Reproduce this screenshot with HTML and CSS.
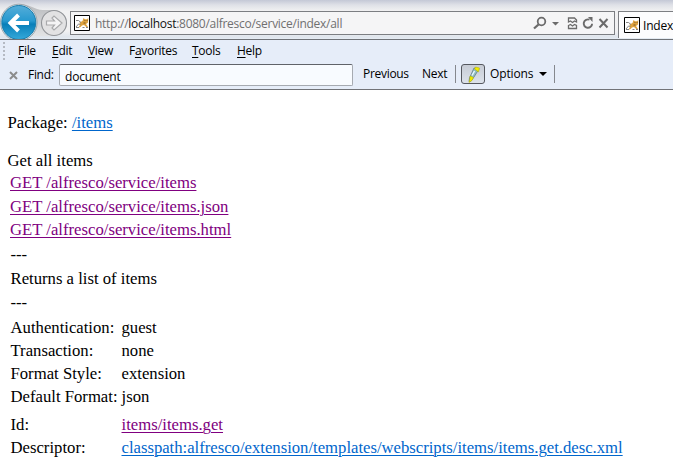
FILE: index.html
```html
<!DOCTYPE html>
<html lang="en">
<head>
<meta charset="utf-8">
<title>Index</title>
<link rel="stylesheet" href="styles.css">
</head>
<body>
<svg class="defs" width="0" height="0" aria-hidden="true">
  <symbol id="cat" viewBox="0 0 16 16">
    <path d="M.5.5h15v15H.5z" fill="#fff" stroke="#000"/>
    <path d="M5.500 7.500 8.500 6 9.500 3l1.500 1.200h2L14.300 3l-.3 4.500-2 1.500 2 3-1.500.3-2.500-2.300-2 .5L6.500 12l-2 .8 1.500-3z" fill="#dda23f"/>
    <path d="M2 5.500h2.500L7 7.500M2 12l2.500-3 2 .5M2 12.500h3M8.500 12.500h2M12 12.500h2" fill="none" stroke="#858585"/>
    <path d="M10.500 5.500h.9M12.700 5.500h.8M9.500 8h2" stroke="#66451c" stroke-width=".8"/>
  </symbol>
</svg>
<header class="chrome">
  <svg class="nav" width="70" height="39" viewBox="0 0 70 39">
    <defs>
      <linearGradient id="blue" x1="0" y1="0" x2="0" y2="1"><stop offset="0" stop-color="#55add9"/><stop offset=".45" stop-color="#2799cf"/><stop offset=".55" stop-color="#087fb9"/><stop offset="1" stop-color="#35a9da"/></linearGradient>
      <linearGradient id="shell" x1="0" y1="0" x2="0" y2="1"><stop offset="0" stop-color="#b9bbbe"/><stop offset="1" stop-color="#e2e3e4"/></linearGradient>
    </defs>
    <path d="M19 4c12 0 15 6 24 6h11a13 13 0 0 1 0 26H19z" fill="url(#shell)"/>
    <circle cx="18.800" cy="22.500" r="18.300" fill="#dce9f0" stroke="#8b989f" stroke-width=".8"/>
    <circle cx="18.800" cy="22.500" r="17" fill="url(#blue)" stroke="#197cab"/>
    <path d="M29 23H12M18.500 15 10.500 23l8 8" fill="none" stroke="#fff" stroke-width="4"/>
    <circle cx="54" cy="23" r="12.500" fill="#e2e2e3" stroke="#929599" stroke-width="1.100"/>
    <path d="M46.500 21h8l-2.500-3 2-2 8 7-8 7-2-2 2.500-3h-8z" fill="#f4f4f5" stroke="#a9aaac" stroke-width="1.200"/>
  </svg>
  <div class="address">
    <svg class="cat" width="16" height="16"><use href="#cat"/></svg>
    <span class="url">http://<b>localhost</b>:8080/alfresco/service/index/all</span>
    <svg class="tools" width="80" height="22" viewBox="530 12 80 22">
      <g fill="none" stroke="#6b6b6b">
        <circle cx="540.500" cy="21.500" r="3.800" stroke-width="1.800"/>
        <path d="m537.500 24.500-4.500 4" stroke-width="2.300"/>
        <path d="M567.500 22v-4h6l2 2v2l-2-1-2 1.500-2-1.500zM567.500 25.500l2-1 2 1.500 2-1.500 2 1v3h-8z" stroke-width="1.300"/>
        <path d="M588.500 19.700a4.200 4.200 0 1 0 2.600 4" stroke-width="1.900"/>
        <path d="m598.500 19 8 8.500m0-8.500-8 8.500" stroke-width="2"/>
      </g>
      <path d="M551 22h7l-3.500 3.500zM587 17h4.500v5z" fill="#6b6b6b"/>
    </svg>
  </div>
  <div class="tab"><svg class="cat" width="16" height="16"><use href="#cat"/></svg><span>Index</span></div>
</header>
<nav class="menu">
  <i class="grip"></i>
  <span class="m1"><u>F</u>ile</span><span class="m2"><u>E</u>dit</span><span class="m3"><u>V</u>iew</span><span class="m4">F<u>a</u>vorites</span><span class="m5"><u>T</u>ools</span><span class="m6"><u>H</u>elp</span>
</nav>
<div class="find">
  <svg class="close" width="9" height="9" viewBox="0 0 9 9"><path d="m1 1 7 7m0-7-7 7" stroke="#8c8c8c" stroke-width="2"/></svg>
  <span class="label">Find:</span>
  <div class="field">document</div>
  <span class="prev">Previous</span><span class="next">Next</span>
  <i class="sep"></i>
  <div class="marker">
    <svg width="22" height="18" viewBox="0 0 22 18">
      <path d="m12 3 5 1-5 8-3 4-2 .5.500-3.500z" fill="#91bdc5" stroke="#59727a" stroke-width=".7"/>
      <path d="m12.500 4 1-2 4 1-1 4zM8 11l3.500 1.500-1.500 3-3 2 .8-3.500z" fill="#f1ed00" stroke="#aaa800" stroke-width=".5"/>
      <path d="m12.500 6-2.500 4.500" stroke="#e8f8fc" stroke-width="1.500"/>
    </svg>
  </div>
  <span class="opts">Options</span><i class="arrow"></i><i class="sep last"></i>
</div>
<main>
  <p class="package">Package: <a href="#">/items</a></p>
  <p class="title">Get all items</p>
  <div class="links">
    <p><a class="seen" href="#">GET /alfresco/service/items</a></p>
    <p><a class="seen" href="#">GET /alfresco/service/items.json</a></p>
    <p><a class="seen" href="#">GET /alfresco/service/items.html</a></p>
  </div>
  <div class="desc"><p>---</p><p>Returns a list of items</p><p>---</p></div>
  <dl>
    <dt>Authentication:</dt><dd>guest</dd>
    <dt>Transaction:</dt><dd>none</dd>
    <dt>Format Style:</dt><dd>extension</dd>
    <dt>Default Format:</dt><dd>json</dd>
  </dl>
  <dl class="meta">
    <dt>Id:</dt><dd><a class="seen" href="#">items/items.get</a></dd>
    <dt>Descriptor:</dt><dd><a class="path" href="#">classpath:alfresco/extension/templates/webscripts/items/items.get.desc.xml</a></dd>
  </dl>
</main>
</body>
</html>
```
FILE: styles.css
```css
* { box-sizing: border-box; }
body { margin: 0; height: 476px; overflow: hidden; background: #fff; color: #000; font-family: "Liberation Serif", serif; font-size: 16.7px; }
.defs { position: absolute; }
p, dl, dd { margin: 0; }
svg { display: block; flex: none; }
.chrome, .menu, .find { display: flex; font: 12px/16px "Open Sans", sans-serif; letter-spacing: -.3px; white-space: nowrap; }
.chrome { height: 40px; border-bottom: 1px solid #6f7277; background: linear-gradient(#c4c8d6 0, #dfe1e7 5px, #f1f1f2 11px, #f1f1f2 31px, #dfe5ec 37px, #e6edf5 39px); }
.address { display: flex; width: 545px; height: 24px; margin-top: 11px; padding: 3px; border: 1px solid #7c7e82; background: #f5f5f6; flex: none; }
.url { width: 440px; margin-left: 5px; padding-top: 1px; color: #707070; letter-spacing: -.27px; }
.url b { color: #111; font-weight: 400; }
.tools { margin: -3px 0 0 -4px; }
.tab { display: flex; flex: 1; height: 27px; margin: 11px 0 0 3px; padding: 5px 0 0 5px; border: solid #7c7e82; border-width: 1px 0 0 1px; background: #fcfcfd; overflow: hidden; }
.tab span { margin: 1px 0 0 3px; letter-spacing: -.2px; }
.menu { height: 22px; padding-top: 3px; background: #e6edf9; }
.menu span { flex: none; }
.grip { width: 2px; height: 18px; margin: -1px 12px 0 3px; background: repeating-linear-gradient(#b5bac3 0 2px, transparent 2px 4px); }
.menu u { text-underline-offset: 2px; }
.m1 { width: 34px; margin-left: 1px; }
.m2 { width: 36px; }
.m3 { width: 41px; }
.m4 { width: 63px; }
.m5 { width: 45px; }
.find { height: 28px; border-bottom: 1px solid #717378; background: #e6edf9; }
.find span { flex: none; padding-top: 4px; }
.close { margin: 9px 10px 0 9px; }
.find .label { width: 31px; padding-top: 5px; }
.field { width: 294px; height: 22px; margin-top: 2px; padding: 4px 5px 0; border: 1px solid #a6aab1; border-top-color: #606369; border-radius: 2px; background: #f8fbff; letter-spacing: -.2px; flex: none; }
.prev { width: 59px; margin-left: 10px; }
.next { width: 33px; }
.sep { width: 1px; height: 18px; margin-top: 3px; background: #85888e; }
.marker { width: 24px; height: 20px; margin: 2px 5px 0; border: 1px solid #55585f; border-radius: 3px; background: linear-gradient(#c7ccd5, #dce2eb); flex: none; }
.find .opts { width: 49px; letter-spacing: -.15px; }
.arrow { width: 0; height: 0; margin: 10px 7px 0 0; border: solid transparent; border-width: 4px 4px 0; border-top-color: #000; flex: none; }
main { padding: 24px 0 0 7.5px; line-height: 18px; white-space: nowrap; }
a { color: #06c; text-decoration-thickness: 1px; text-underline-offset: 2px; }
.seen { color: #800080; }
.path { letter-spacing: -.01px; }
.title { margin-top: 20px; }
.links { display: grid; gap: 5.5px; padding: 4px 0 0 2.5px; }
.desc { display: grid; gap: 6px; padding: 7px 0 0 3px; }
dl { display: grid; grid-template-columns: 111px auto; row-gap: 5px; padding: 7px 0 0 3px; }
.meta { padding-top: 10px; }
```
